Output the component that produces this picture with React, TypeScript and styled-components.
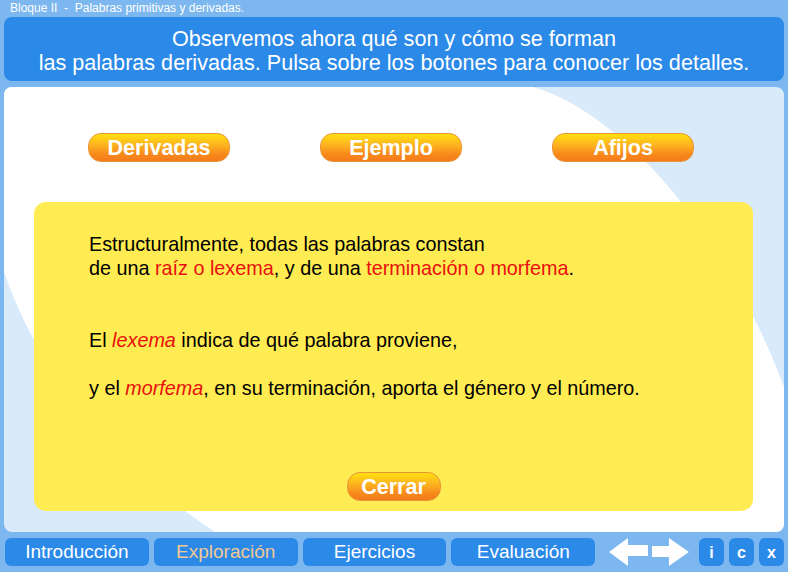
import React from "react";
import styled, { createGlobalStyle } from "styled-components";

const GlobalStyle = createGlobalStyle`
  html, body { margin: 0; padding: 0; }
  body {
    background: #7db7ef;
    font-family: "Liberation Sans", Arial, sans-serif;
    width: 788px;
    height: 572px;
    overflow: hidden;
  }
`;

const Page = styled.div`
  width: 788px;
  height: 572px;
  padding: 0 4px;
  box-sizing: border-box;
  display: flex;
  flex-direction: column;
`;

const Breadcrumb = styled.div`
  height: 17px;
  padding-left: 6px;
  font-size: 12px;
  line-height: 16px;
  color: #ffffff;
  white-space: pre;
`;

const TitleBox = styled.div`
  height: 64px;
  background: #2b89e8;
  border-radius: 8px;
  color: #ffffff;
  font-size: 21.6px;
  line-height: 24px;
  text-align: center;
  display: flex;
  flex-direction: column;
  justify-content: center;
  padding-top: 3px;
  box-sizing: border-box;
`;

const Panel = styled.div`
  position: relative;
  margin-top: 6px;
  height: 445px;
  border-radius: 8px;
  background: #d9eafb;
  overflow: hidden;
`;

const PanelBg = styled.svg`
  position: absolute;
  left: 0;
  top: 0;
  width: 780px;
  height: 445px;
`;

const PanelContent = styled.div`
  position: relative;
  display: flex;
  flex-direction: column;
  padding: 46px 0 0 30px;
  height: 100%;
  box-sizing: border-box;
`;

const ButtonRow = styled.div`
  display: flex;
  gap: 90px;
  padding-left: 54px;
`;

const OrangeButton = styled.button<{ $w: number }>`
  width: ${(p) => p.$w}px;
  height: 29px;
  border-radius: 13px;
  border: 1px solid #e8953a;
  background: linear-gradient(to bottom, #ffe010 0%, #fdb420 40%, #f88a1c 75%, #f47a1a 100%);
  color: #ffffff;
  font-family: "Liberation Sans", Arial, sans-serif;
  font-weight: bold;
  font-size: 21.5px;
  line-height: 28px;
  padding: 0;
  text-align: center;
  cursor: pointer;
  box-sizing: border-box;
`;

const InfoCard = styled.div`
  margin-top: 40px;
  width: 719px;
  height: 309px;
  background: #ffeb52;
  border-radius: 12px;
  box-sizing: border-box;
  padding: 30px 0 10px 55px;
  display: flex;
  flex-direction: column;
`;

const Para = styled.p<{ $gap?: number }>`
  margin: ${(p) => p.$gap ?? 0}px 0 0 0;
  font-size: 19.8px;
  line-height: 24px;
  color: #000000;
`;

const Hi = styled.span<{ $italic?: boolean }>`
  color: #e8100e;
  font-style: ${(p) => (p.$italic ? "italic" : "normal")};
`;

const CloseRow = styled.div`
  margin-top: auto;
  display: flex;
  justify-content: center;
  padding-right: 55px;
`;

const Nav = styled.div`
  margin-top: 6px;
  height: 28px;
  display: flex;
  align-items: stretch;
  padding-left: 1px;
`;

const Tab = styled.div<{ $active?: boolean }>`
  width: 144px;
  margin-right: 5px;
  background: #2b89e8;
  border-radius: 6px;
  color: ${(p) => (p.$active ? "#f0c892" : "#ffffff")};
  font-size: 19px;
  line-height: 28px;
  text-align: center;
`;

const Arrows = styled.svg`
  width: 84px;
  height: 28px;
  margin-left: 8px;
  margin-right: 2px;
`;

const SmallBtn = styled.div`
  width: 25px;
  margin-left: 5px;
  background: #2b89e8;
  border-radius: 6px;
  color: #ffffff;
  font-weight: bold;
  font-size: 16px;
  line-height: 30px;
  text-align: center;
`;

export default function App() {
  return (
    <>
      <GlobalStyle />
      <Page>
        <Breadcrumb>Bloque II  -  Palabras primitivas y derivadas.</Breadcrumb>
        <TitleBox>
          <div>Observemos ahora qué son y cómo se forman</div>
          <div>las palabras derivadas. Pulsa sobre los botones para conocer los detalles.</div>
        </TitleBox>
        <Panel>
          <PanelBg viewBox="0 0 780 445">
            <path
              d="M0,0 L529,0 C615,25 720,140 780,300 L780,445 L211,445 C120,385 40,300 0,185 Z"
              fill="#ffffff"
            />
          </PanelBg>
          <PanelContent>
            <ButtonRow>
              <OrangeButton $w={142}>Derivadas</OrangeButton>
              <OrangeButton $w={142}>Ejemplo</OrangeButton>
              <OrangeButton $w={142}>Afijos</OrangeButton>
            </ButtonRow>
            <InfoCard>
              <Para>
                Estructuralmente, todas las palabras constan
                <br />
                de una <Hi>raíz o lexema</Hi>, y de una <Hi>terminación o morfema</Hi>.
              </Para>
              <Para $gap={48}>
                El <Hi $italic>lexema</Hi> indica de qué palabra proviene,
              </Para>
              <Para $gap={24}>
                y el <Hi $italic>morfema</Hi>, en su terminación, aporta el género y el número.
              </Para>
              <CloseRow>
                <OrangeButton $w={94}>Cerrar</OrangeButton>
              </CloseRow>
            </InfoCard>
          </PanelContent>
        </Panel>
        <Nav>
          <Tab>Introducción</Tab>
          <Tab $active>Exploración</Tab>
          <Tab>Ejercicios</Tab>
          <Tab>Evaluación</Tab>
          <Arrows viewBox="0 0 84 28">
            <path d="M1,14 L20,0 L20,7 L40,7 L40,18 L20,18 L20,28 Z" fill="#ffffff" />
            <path d="M44,8 L61,8 L61,0 L81,14 L61,28 L61,19 L44,19 Z" fill="#ffffff" />
          </Arrows>
          <SmallBtn>i</SmallBtn>
          <SmallBtn>c</SmallBtn>
          <SmallBtn>x</SmallBtn>
        </Nav>
      </Page>
    </>
  );
}
